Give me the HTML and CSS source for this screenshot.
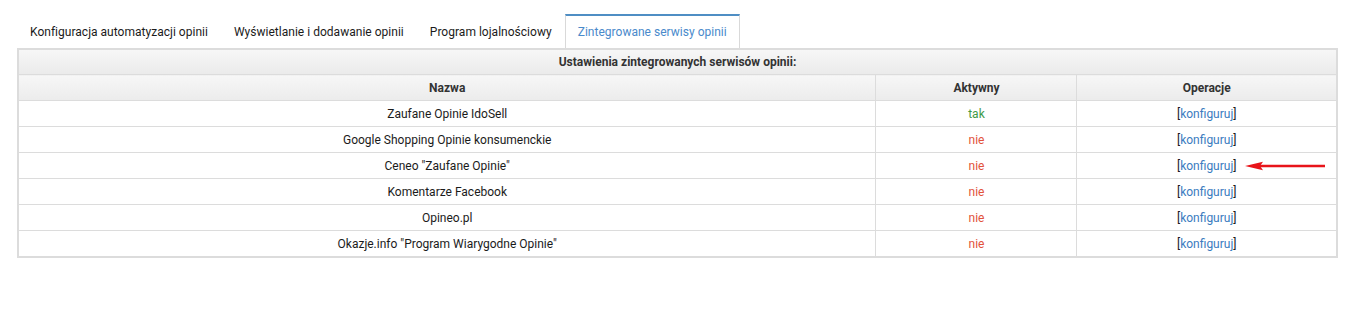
FILE: index.html
```html
<!DOCTYPE html>
<html lang="pl">
<head>
    <meta charset="UTF-8">
    <title>Serwisy opinii</title>
    <link rel="stylesheet" href="styles.css">
</head>
<body>
    <div class="page">
        <!-- Tabs -->
        <ul class="tabs">
            <li><a href="#">Konfiguracja automatyzacji opinii</a></li>
            <li><a href="#">Wyświetlanie i dodawanie opinii</a></li>
            <li><a href="#">Program lojalnościowy</a></li>
            <li class="active"><a href="#">Zintegrowane serwisy opinii</a></li>
        </ul>

        <!-- Services table -->
        <table class="services">
            <colgroup>
                <col>
                <col class="col-active">
                <col class="col-ops">
            </colgroup>
            <thead>
                <tr class="caption-row">
                    <th colspan="3">Ustawienia zintegrowanych serwisów opinii:</th>
                </tr>
                <tr>
                    <th>Nazwa</th>
                    <th>Aktywny</th>
                    <th>Operacje</th>
                </tr>
            </thead>
            <tbody>
                <tr>
                    <td>Zaufane Opinie IdoSell</td>
                    <td class="yes">tak</td>
                    <td>[<a href="#">konfiguruj</a>]</td>
                </tr>
                <tr>
                    <td>Google Shopping Opinie konsumenckie</td>
                    <td class="no">nie</td>
                    <td>[<a href="#">konfiguruj</a>]</td>
                </tr>
                <tr>
                    <td>Ceneo "Zaufane Opinie"</td>
                    <td class="no">nie</td>
                    <td class="ops-cell">[<a href="#">konfiguruj</a>]
                        <svg class="arrow" width="80" height="10" viewBox="0 0 80 10">
                            <path d="M80 5 H14" stroke="#e8141a" stroke-width="2.5"/>
                            <path d="M0 5 L18 0.8 L15 5 L18 9.2 Z" fill="#e8141a"/>
                        </svg>
                    </td>
                </tr>
                <tr>
                    <td>Komentarze Facebook</td>
                    <td class="no">nie</td>
                    <td>[<a href="#">konfiguruj</a>]</td>
                </tr>
                <tr>
                    <td>Opineo.pl</td>
                    <td class="no">nie</td>
                    <td>[<a href="#">konfiguruj</a>]</td>
                </tr>
                <tr>
                    <td>Okazje.info "Program Wiarygodne Opinie"</td>
                    <td class="no">nie</td>
                    <td>[<a href="#">konfiguruj</a>]</td>
                </tr>
            </tbody>
        </table>
    </div>
</body>
</html>
```

FILE: styles.css
```css
/* General body styling */
body {
    margin: 0;
    font-family: Roboto, "Liberation Sans", Arial, sans-serif;
    font-size: 12px;
    color: #1b1b1b;
    background: #fff;
}

.page {
    padding: 14px 0 0 17px;
    width: 1321px;
}

/* Tabs */
.tabs {
    display: flex;
    list-style: none;
    margin: 0;
    padding: 0;
}

.tabs li {
    border: 1px solid transparent;
    border-top-width: 2px;
    border-bottom: none;
}

.tabs a {
    display: block;
    padding: 9px 12px;
    line-height: 14px;
    letter-spacing: 0.02px;
    color: #1b1b1b;
    text-decoration: none;
}

.tabs li.active {
    border-color: #d9d9d9;
    border-top-color: #4f8ec4;
    background: #fff;
}

.tabs li.active a {
    color: #4a8acb;
}

/* Table */
.services {
    width: 100%;
    border-collapse: collapse;
    border: 2px solid #dcdcdc;
    table-layout: fixed;
}

.col-active { width: 201px; }
.col-ops { width: 260px; }

.services th,
.services td {
    border: 1px solid #dcdcdc;
    text-align: center;
    height: 25px;
    padding: 0 4px;
}

.services .caption-row th {
    height: 24px;
}

.services th {
    font-weight: bold;
    color: #333;
    background: linear-gradient(#f7f7f7, #ebebeb);
}

.services td a {
    color: #3b7cc0;
    text-decoration: none;
}

.yes { color: #3e9a47; }
.no { color: #e2523b; }

.ops-cell {
    position: relative;
}

.arrow {
    position: absolute;
    left: 168px;
    top: 8px;
}
```
